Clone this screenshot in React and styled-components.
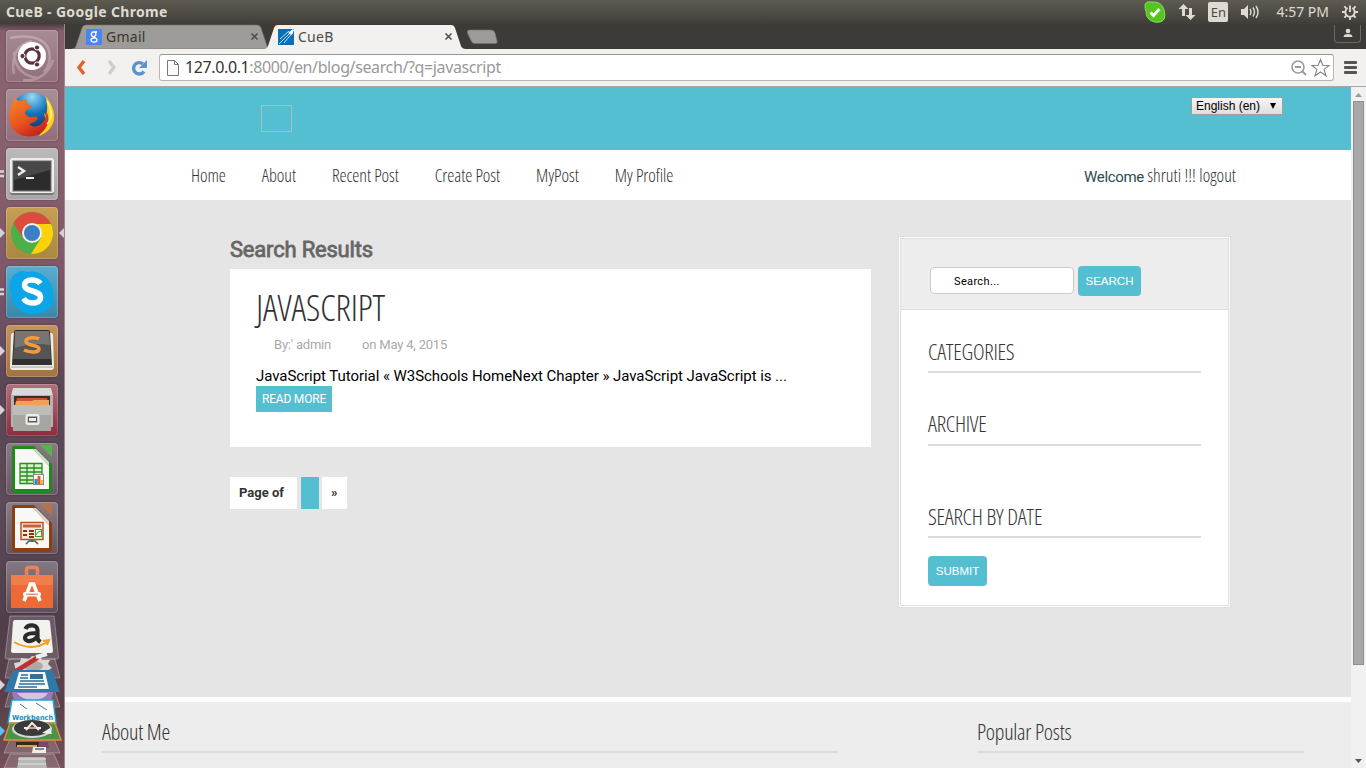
import React from "react";
import styled, { createGlobalStyle, css } from "styled-components";

const teal = "#55bfd2";

const GlobalStyle = createGlobalStyle`
  * { box-sizing: border-box; }
  html, body { margin: 0; padding: 0; height: 100%; overflow: hidden; }
  body { font-family: "Liberation Sans", Arial, sans-serif; }
`;

const condensed = css`
  font-family: "Open Sans", sans-serif;
  font-stretch: 75%;
  font-weight: 300;
`;

const Desktop = styled.div`
  width: 1366px;
  height: 768px;
  display: flex;
  flex-direction: column;
  overflow: hidden;
`;

const MenuBar = styled.header`
  height: 24px;
  flex: none;
  display: flex;
  align-items: center;
  justify-content: space-between;
  padding: 0 8px 0 6px;
  background: linear-gradient(#5e5b50, #3f3e39);
  color: #dfdbd2;
  font-family: "Noto Sans", sans-serif;
  font-size: 14px;
`;
const WindowTitle = styled.span`
  margin-top: -2px;
  font-weight: 700;
  font-size: 14px;
  letter-spacing: 0.34px;
`;
const Tray = styled.div`
  display: flex;
  align-items: center;
  height: 24px;
  svg { display: block; }
`;
const TrayItem = styled.div`
  margin-right: ${(p) => p.$gap}px;
  white-space: nowrap;
`;
const Clock = styled(TrayItem)`
  margin-top: -2px;
`;
const LangBadge = styled.div`
  width: 20px;
  height: 20px;
  margin-right: 12px;
  border-radius: 2px;
  background: #dfdbd2;
  color: #4a4842;
  font-size: 13px;
  line-height: 20px;
  text-align: center;
`;

const Workspace = styled.div`
  flex: 1;
  min-height: 0;
  display: flex;
`;

const Dock = styled.aside`
  width: 65px;
  flex: none;
  padding: 6px 0 0;
  display: flex;
  flex-direction: column;
  gap: 7px;
  border-right: 1px solid #a08592;
  background: linear-gradient(#4c3a42 0, #85606c 7px, #8a6370 80px, #815a69 230px, #6e5064 300px, #5a4655 360px, #5c4a58 480px, #513e4b 600px, #59404a 680px, #76505a 744px);
`;
const DockRow = styled.div`
  display: flex;
  align-items: center;
  height: 52px;
  flex: none;
`;
const Marker = styled.div`
  width: 6px;
  height: 10px;
  svg { display: block; }
`;
const Tile = styled.div`
  width: 52px;
  height: 52px;
  border-radius: 4px;
  background: ${(p) => p.$bg};
  box-shadow: inset 0 0 0 1px rgba(255, 255, 255, 0.2), 0 0 2px rgba(0, 0, 0, 0.4);
  svg { display: block; }
`;
const DockStack = styled.svg`
  display: block;
  flex: none;
  margin-top: -7px;
`;

const Browser = styled.section`
  width: 1301px;
  display: flex;
  flex-direction: column;
`;
const TabStrip = styled.div`
  height: 25px;
  flex: none;
  display: flex;
  justify-content: space-between;
  padding: 0 5px 0 7px;
  background: #3c3b37;
`;
const Tabs = styled.div`
  display: flex;
  align-items: flex-end;
`;
const TabBox = styled.div`
  display: grid;
  width: ${(p) => p.$w}px;
  height: 25px;
  margin-right: -8px;
  z-index: ${(p) => (p.$active ? 1 : 0)};
  > * { grid-area: 1 / 1; }
`;
const TabLabel = styled.div`
  display: flex;
  align-items: center;
  padding: 0 13px 0 14px;
  gap: 4px;
  z-index: 1;
  font: 14px "Noto Sans", sans-serif;
  color: ${(p) => (p.$active ? "#4a4a4a" : "#3c3528")};
  span { flex: 1; letter-spacing: 0.25px; }
`;
const NewTab = styled.svg`
  margin: 0 0 4px 8px;
`;
const UserButton = styled.div`
  width: 27px;
  height: 18px;
  margin-top: 1px;
  display: flex;
  justify-content: center;
  border: 1px solid #6a6964;
  border-top: 0;
  border-radius: 0 0 4px 4px;
`;
const Toolbar = styled.div`
  height: 38px;
  flex: none;
  display: flex;
  align-items: center;
  padding: 0 8px 0 10px;
  background: #f2f1f0;
  border-bottom: 1px solid #a9a6a3;
`;
const NavIcon = styled.div`
  width: 20px;
  height: 20px;
  margin-right: 8px;
`;
const Address = styled.div`
  width: 1175px;
  height: 27px;
  display: flex;
  align-items: center;
  padding: 0 2px 0 7px;
  border: 1px solid #b8b5b2;
  border-top-color: #98958f;
  border-radius: 3px;
  background: #fff;
  font: 16px "Noto Sans", sans-serif;
  color: #999;
  b { font-weight: 400; color: #333; }
`;
const Url = styled.span`
  flex: 1;
  margin-left: 6px;
  margin-top: -2px;
  letter-spacing: -0.38px;
`;
const MenuLines = styled.div`
  display: grid;
  gap: 2px;
  margin-left: 10px;
  i { display: block; width: 13px; height: 3px; border-radius: 1px; background: #555; }
`;

const Viewport = styled.div`
  flex: 1;
  min-height: 0;
  display: flex;
`;
const Page = styled.div`
  width: 1286px;
  display: flex;
  flex-direction: column;
  background: #fff;
`;
const Banner = styled.div`
  height: 63px;
  flex: none;
  display: flex;
  justify-content: space-between;
  align-items: flex-start;
  padding: 10px 68px 0 196px;
  background: ${teal};
`;
const EmptyLogo = styled.div`
  width: 31px;
  height: 27px;
  margin-top: 8px;
  border: 1px solid #9cc3c9;
`;
const LanguageSelect = styled.div`
  width: 92px;
  height: 18px;
  display: flex;
  align-items: center;
  justify-content: space-between;
  padding: 0 6px 0 4px;
  border: 1px solid #a29f9b;
  background: linear-gradient(#f6f6f6, #dedede);
  font-size: 12px;
  color: #000;
`;
const MainNav = styled.nav`
  height: 50px;
  flex: none;
  display: flex;
  align-items: center;
  padding: 0 115px 0 126px;
  background: #fff;
`;
const NavLink = styled.a`
  ${condensed}
  font-size: 18px;
  letter-spacing: -0.08px;
  color: #333;
  white-space: nowrap;
  margin-right: 36px;
`;
const Welcome = styled.div`
  margin-left: auto;
  white-space: nowrap;
  font: 15px Roboto, sans-serif;
  letter-spacing: -0.35px;
  color: #2d4a52;
`;
const UserLink = styled.a`
  ${condensed}
  font-size: 18px;
  letter-spacing: 0.04px;
  color: #333;
`;

const Content = styled.main`
  height: 497px;
  flex: none;
  display: flex;
  align-items: flex-start;
  padding: 36px 120px 0 165px;
  gap: 27px;
  background: #e5e5e5;
`;
const Results = styled.div`
  width: 641px;
`;
const ResultsTitle = styled.h1`
  height: 33px;
  margin: 0;
  padding-top: 1px;
  font: 400 22px/26px Roboto, sans-serif;
  letter-spacing: -0.2px;
  -webkit-text-stroke: 0.8px #666;
  color: #666;
`;
const Post = styled.article`
  height: 178px;
  padding: 12px 26px;
  background: #fff;
`;
const PostTitle = styled.h2`
  ${condensed}
  margin: 0;
  font-size: 36px;
  line-height: 54px;
  letter-spacing: -0.12px;
  color: #333;
`;
const PostMeta = styled.div`
  display: flex;
  gap: 31px;
  padding-left: 18px;
  font: 13px/20px Roboto, sans-serif;
  letter-spacing: -0.2px;
  color: #aaa;
`;
const Excerpt = styled.p`
  margin: 11px 0 0;
  font: 15px/20px Roboto, sans-serif;
  letter-spacing: -0.055px;
  color: #000;
`;
const ReadMore = styled.a`
  display: block;
  width: 76px;
  height: 26px;
  background: ${teal};
  color: #fff;
  font: 12px/27px Roboto, sans-serif;
  letter-spacing: -0.2px;
  text-align: center;
`;
const Pager = styled.div`
  display: flex;
  margin-top: 30px;
`;
const PageCell = styled.span`
  width: ${(p) => p.$w}px;
  height: 32px;
  margin-right: ${(p) => p.$gap || 0}px;
  padding-left: 9px;
  background: ${(p) => (p.$current ? teal : "#fff")};
  color: #333;
  font: 700 13px/32px Roboto, sans-serif;
`;

const Sidebar = styled.aside`
  width: 333px;
  height: 372px;
  border: 3px double #dedede;
  background: #fff;
`;
const SearchBox = styled.div`
  height: 71px;
  display: flex;
  padding: 27px 0 0 29px;
  gap: 4px;
  background: #ededed;
  border-bottom: 1px solid #dedede;
`;
const SearchInput = styled.div`
  width: 144px;
  height: 27px;
  margin-top: 1px;
  padding-left: 23px;
  border: 1px solid #ccc;
  border-radius: 4px;
  background: #fff;
  color: #000;
  font: 11px/27px Roboto, sans-serif;
  letter-spacing: 0.35px;
`;
const Button = styled.button`
  width: ${(p) => p.$w}px;
  height: 30px;
  padding: 0;
  border: 0;
  border-radius: 4px;
  background: ${teal};
  color: #fff;
  font: 11.5px "Liberation Sans", sans-serif;
`;
const Widgets = styled.div`
  padding: 27px 27px 0 27px;
`;
const WidgetTitle = styled.h3`
  ${condensed}
  height: 36px;
  margin: 0 0 ${(p) => p.$mb}px;
  border-bottom: 2px solid #dcdcdc;
  font-size: 22px;
  line-height: ${(p) => p.$line || 28}px;
  letter-spacing: -0.25px;
  color: #333;
`;
const Footer = styled.footer`
  flex: 1;
  margin-top: 5px;
  display: flex;
  gap: 139px;
  padding: 15px 0 0 37px;
  background: #ededed;
`;
const FooterColumn = styled.div`
  width: ${(p) => p.$w}px;
`;

const ScrollTrack = styled.div`
  width: 15px;
  display: flex;
  flex-direction: column;
  align-items: center;
  justify-content: space-between;
  background: #f1f1f1;
`;
const ScrollThumb = styled.div`
  width: 11px;
  height: 564px;
  margin-bottom: auto;
  border: 1px solid #8f8f8f;
  background: #a8a8a8;
`;

const glass = "linear-gradient(rgba(255,255,255,.28), rgba(255,255,255,.08))";

function UbuntuIcon() {
  return (
    <svg width="52" height="52" viewBox="0 0 52 52">
      <path d="M4 8C20 5 34 6 41 16c5 8 3 19-3 26M8 44C5 28 10 14 26 11M17 50c14 2 26-6 30-20M8 22c0 14 8 24 24 26" fill="none" stroke="#fff" strokeOpacity=".25" strokeWidth="2.500" />
      <circle cx="26" cy="26" r="14" fill="#fff" />
      <circle cx="26" cy="26" r="7.200" fill="none" stroke="#57333f" strokeWidth="3.200" />
      <g fill="#57333f" stroke="#fff" strokeWidth="1">
        <circle cx="16.500" cy="26" r="2.600" /><circle cx="31" cy="17.500" r="2.600" /><circle cx="31" cy="34.500" r="2.600" />
      </g>
    </svg>
  );
}
function FirefoxIcon() {
  return (
    <svg width="52" height="52" viewBox="0 0 52 52">
      <defs>
        <radialGradient id="ffb" cx=".5" cy=".1" r=".8"><stop offset="0" stopColor="#8fdcf7" /><stop offset=".5" stopColor="#1672b8" /><stop offset="1" stopColor="#0c2d66" /></radialGradient>
        <linearGradient id="ffo" x1="0" y1="0" x2=".6" y2="1"><stop offset="0" stopColor="#f58a28" /><stop offset=".6" stopColor="#e8551d" /><stop offset="1" stopColor="#c9241c" /></linearGradient>
      </defs>
      <circle cx="26" cy="25" r="21.500" fill="url(#ffb)" />
      <path d="M39 7c6 6 10 14 9 23-1 8-7 14-15 17 5-7 8-14 5-23l3 3c0-7 1-13-2-20z" fill="#ffcf1a" />
      <path d="M9 8c1 3 3 4 6 4 2 0 3-2 6-2-1 3 0 4 2 6 2 0 3 1 3 2-3 2-6 2-7 6 1 2 3 3 4 4 4 1 6-2 9 1-1 3-5 5-9 6 4 4 11 3 15-3 2-4 2-9 2-10 5 7 2 17-5 22-9 6-22 4-28-4C1 33 3 19 7 14c0-2 1-4 2-6z" fill="url(#ffo)" />
      <path d="M41 12c4 7 5 12 3 18M45 21c1 5 0 10-4 14" stroke="#fff19a" strokeWidth="1.500" fill="none" />
    </svg>
  );
}
function TerminalIcon() {
  return (
    <svg width="52" height="52" viewBox="0 0 52 52">
      <rect x="4" y="10" width="44" height="37" rx="2" fill="#777" />
      <rect x="4" y="10" width="44" height="35" rx="2" fill="#eee" />
      <rect x="6.500" y="12.500" width="39" height="31" fill="#555" stroke="#aaa" />
      <rect x="8" y="14" width="36" height="28" fill="#2c2c2c" /><path d="M8 14h36v8L8 32z" fill="#484848" />
      <path d="M12 19l6 4-6 4" fill="none" stroke="#eee" strokeWidth="2.400" /><path d="M20 30h8" stroke="#eee" strokeWidth="2" />
    </svg>
  );
}
function ChromeIcon() {
  return (
    <svg width="52" height="52" viewBox="0 0 52 52">
      <circle cx="26" cy="26" r="21" fill="#4caf48" />
      <path d="M7.500 16A21 21 0 0 1 45 17L26 17 17 31z" fill="#dd4b3e" />
      <path d="M26 17h19a21 21 0 0 1-20 30l10-16z" fill="#fdd20a" />
      <circle cx="26" cy="26" r="10" fill="#f4f1e8" /><circle cx="26" cy="26" r="8" fill="#3b7fc4" />
    </svg>
  );
}
function SkypeIcon() {
  return (
    <svg width="52" height="52" viewBox="0 0 52 52">
      <path d="M5 14A12 12 0 0 1 21 6c13-3 27 8 26 22 3 9-4 19-15 19-14 4-27-6-27-20-2-4-2-9 0-13z" fill="#0ba5e8" />
      <path d="M34.500 17.500c-2-2.500-5-3.500-9-3.500-4.500 0-7 2-7 5 0 7.500 16 4.500 16 12.500 0 4-4 5.500-8 5.500s-7-1.500-9-4.500" fill="none" stroke="#fff" strokeWidth="5.500" />
    </svg>
  );
}
function SublimeIcon() {
  return (
    <svg width="52" height="52" viewBox="0 0 52 52">
      <path d="M5 10q0-2 2-2h38q2 0 2 2l1 32q0 3-3 3H7q-3 0-3-3z" fill="#eeebe6" />
      <path d="M5 42h42" stroke="#aaa49a" strokeWidth="1" />
      <path d="M8 7q0-2 2-2h32q2 0 2 2l2 33H6z" fill="#2f2f2f" /><path d="M9 6h34l2 28H7z" fill="#555" /><path d="M9 6h34l1 14q-16-3-35 3z" fill="#757575" />
      <path d="M33 14c-3-2-13-2-13 2.500 0 4.500 13 3 13 7.500 0 4-10 3.500-15 1" fill="none" stroke="#f99a36" strokeWidth="3.600" />
    </svg>
  );
}
function FilesIcon() {
  return (
    <svg width="52" height="52" viewBox="0 0 52 52">
      <path d="M7 4h38l2 8H5z" fill="#d9d9d7" /><path d="M5 11h42v32H5z" fill="#b3b3b0" />
      <path d="M8 12h36v10H8z" fill="#3a2d28" /><path d="M11 14h30l2 8H9z" fill="#c5562e" /><path d="M10 17h16l2-1h15v6H9z" fill="#f1a05b" />
      <path d="M7 21h38v26H7z" fill="#a5a5a2" /><path d="M7 21h38v10H7z" fill="#bcbcb9" />
      <rect x="20.500" y="31" width="12" height="9" rx="1.500" fill="#aaa" stroke="#ececea" strokeWidth="2" /><rect x="22.500" y="33.500" width="8" height="4" fill="#eee" stroke="#555" />
    </svg>
  );
}
function OfficeIcon({ color, light, children }) {
  return (
    <svg width="52" height="52" viewBox="0 0 52 52">
      <path d="M8 3h20l18 18v26q0 3-3 3H9q-3 0-3-3V5q0-2 2-2z" fill={color} />
      <path d="M34 2h12v12z" fill={light} />
      <path d="M9 6h18l16 17v23H9z" fill="#f8f8f6" /><path d="M27 6l16 17V19L30 6z" fill="#d8d8d4" />
      {children}
    </svg>
  );
}
function SoftwareIcon() {
  return (
    <svg width="52" height="52" viewBox="0 0 52 52">
      <path d="M20.500 18V9q0-2.500 2.500-2.500h6q2.500 0 2.500 2.500v9" fill="none" stroke="#e9835e" strokeWidth="3.500" />
      <path d="M5 14h42v33H5z" fill="#ee6a34" /><path d="M5 14h42v10H5z" fill="#f28a5a" fillOpacity=".6" />
      <path d="M24.500 23l-6.500 17M27.500 23l6.500 17M23 23h6" stroke="#fff" strokeWidth="3.600" fill="none" /><rect x="17" y="31" width="18" height="4.500" rx="2" fill="#fff" /><path d="M20 33.200h12" stroke="#ee6a34" />
    </svg>
  );
}
function FoldedStack() {
  return (
    <DockStack width="64" height="155" viewBox="0 0 64 155">
      <g fill="#fff" fillOpacity=".15" stroke="#fff" strokeOpacity=".3">
        <path d="M10 3h44l4.500 41q0 2-2 2H7q-2 0-2-2z" /><path d="M9 46h46l5 19H5z" />
        <path d="M10 76h44l6 18H5z" /><path d="M10 126h44l6 14H4z" /><path d="M10 141h44l6 14H4z" />
      </g>
      <path d="M14 7h34q2 0 2 2l3 29q0 2-2 2H14q-3 0-3-2l2-29z" fill="#f2f2ef" />
      <path d="M25.500 16c2-5 12-5 12 1v8q0 2 3 4M37 20c-9 0-12 1.500-12 5s7 5 12-1" fill="none" stroke="#2b2b2b" strokeWidth="4.200" />
      <path d="M14 29q18 10 33 0M43 28l6-1-2 5" fill="none" stroke="#f79a22" strokeWidth="2" />
      <path d="M14 50l6-1 1-4 8 1 3-3 8 1 2 3 8 0-2 4 4 4-5 3v4H17z" fill="#d9d8d4" /><ellipse cx="33" cy="53" rx="10" ry="5" fill="#aaa9a7" />
      <path d="M13 60l24-15" stroke="#c42f27" strokeWidth="4.500" fill="none" strokeLinecap="round" /><path d="M36 44l11-3" stroke="#eee" strokeWidth="4" />
      <path d="M13 57h39l8 22H4z" fill="#2e79a8" /><path d="M19 59h26l4 17H14z" fill="#f6f6f4" />
      <path d="M21 62h7M20 65h8M20 68h24M19 71h26M18 74h19" stroke="#2e6f9c" strokeWidth="1.300" /><path d="M30 61h13v5H30z" fill="#356f9b" />
      <path d="M12 79h41q0 13-20 14T12 79z" fill="#9a78bd" /><path d="M17 80h31q-4 7-15 7t-16-7z" fill="#d4c4e4" />
      <path d="M12 87h41l3 23H8z" fill="#fff" stroke="#1aa9dc" strokeWidth="1.400" /><path d="M20 91l7 5M36 90l11 7" stroke="#3a7fae" />
      <text x="12" y="107" fontFamily="DejaVu Sans" fontWeight="700" fontSize="7" textLength="41" lengthAdjust="spacingAndGlyphs" fill="#138dc0">Workbench</text>
      <path d="M10 110h45l6 17H4z" fill="#4b9444" stroke="#e88b39" strokeWidth="1.400" />
      <ellipse cx="32" cy="116" rx="20" ry="9" fill="#d6d8d5" /><ellipse cx="32" cy="115" rx="18" ry="8" fill="#383b39" /><path d="M26 117l6-7 7 7M24 115h17" stroke="#eee" strokeWidth="2" fill="none" /><path d="M29 115h7" stroke="#e05a2a" strokeWidth="1.200" /><path d="M42 120l8-5 2 6z" fill="#eee" />
      <path d="M16 129h24v5H16z" fill="#34291e" /><path d="M17 133h20" stroke="#d8a652" strokeWidth="2" /><path d="M39 129h9l1 6H38z" fill="#7c4570" /><path d="M33 134h13v6H32z" fill="#eee" /><path d="M35 136h9" stroke="#222" />
      <path d="M19 144h26l2 11H17z" fill="#b8b8b5" /><path d="M18 146h28M18 151h28" stroke="#d4d4d2" strokeWidth="1.500" />
      <path d="M0 67v10l5-5z" fill="#d9d4d4" /><path d="M0 113v10l5-5z" fill="#5fc2ee" />
    </DockStack>
  );
}

const dots = <svg width="6" height="10"><path d="M0 2.500h4M0 7h4" stroke="#d8d2d4" strokeWidth="2.400" /></svg>;
const arrow = <svg width="6" height="10"><path d="M0 0v10l5-5z" fill="#d8d2d4" /></svg>;

const launchers = [
  { bg: glass, icon: <UbuntuIcon /> },
  { bg: glass, icon: <FirefoxIcon /> },
  { bg: "linear-gradient(#bbb9ba,#a9a6a8)", icon: <TerminalIcon />, mark: dots },
  { bg: "linear-gradient(#c79f55,#aa883f)", icon: <ChromeIcon />, mark: arrow, focused: true },
  { bg: "linear-gradient(#58aecf,#3d86a8)", icon: <SkypeIcon />, mark: dots },
  { bg: "linear-gradient(#c5935e,#a2733f)", icon: <SublimeIcon />, mark: arrow },
  { bg: "linear-gradient(#b06f7b,#8d2c3c)", icon: <FilesIcon />, mark: arrow },
  {
    bg: glass,
    icon: (
      <OfficeIcon color="#1f8a17" light="#54b54b">
        <path d="M14 20h22v21H14z" fill="#d4f1cb" /><path d="M14 20.500h22v20H14zM14 25h22M14 29h22M14 33h22M14 37h22M21 20v20M28 20v20" fill="none" stroke="#2b8c22" strokeWidth="1.300" />
        <rect x="27.500" y="31.500" width="10" height="10" fill="#fff" stroke="#888" /><path d="M30 41v-5" stroke="#188ed0" strokeWidth="3" /><path d="M33 41v-8" stroke="#e8581c" strokeWidth="3" /><path d="M36 41v-4" stroke="#f5be2a" strokeWidth="2" />
      </OfficeIcon>
    ),
  },
  {
    bg: glass,
    icon: (
      <OfficeIcon color="#8d3f12" light="#b9714a">
        <rect x="15" y="20.500" width="22" height="17" fill="#fbe9dd" stroke="#b5541d" strokeWidth="1.500" /><path d="M17 24h18" stroke="#c4642d" strokeWidth="3" />
        <path d="M17 29h4M17 33h4M23 29h5M23 32h5M23 35h5" stroke="#8d3212" strokeWidth="2" /><rect x="29.500" y="27.500" width="6" height="7" fill="#fff" stroke="#3c9b34" /><path d="M30 33l2-3 3-1" stroke="#3c9b34" fill="none" />
        <path d="M26 38v2M20 42l3-3h6l3 3" stroke="#555" strokeWidth="1.500" fill="none" />
      </OfficeIcon>
    ),
  },
  { bg: glass, icon: <SoftwareIcon /> },
];

function Tab({ label, icon, width, active }) {
  return (
    <TabBox $w={width} $active={active}>
      <svg width={width} height="25">
        <path d={`M0 25q3 0 4-3L10 4q1-3 4-3H${width - 15}q3 0 4 3l6 18q1 3 5 3z`} fill={active ? "#f2f1f0" : "#9d9b98"} stroke={active ? "none" : "#77756f"} strokeWidth=".6" />
      </svg>
      <TabLabel $active={active}>
        {icon}
        <span>{label}</span>
        <svg width="9" height="9"><path d="M1.500 1.500l6 6M7.500 1.500l-6 6" stroke="#4b4b4b" strokeWidth="1.500" /></svg>
      </TabLabel>
    </TabBox>
  );
}

const gIcon = (
  <svg width="16" height="16">
    <rect width="16" height="16" rx="1" fill="#4a86f0" />
    <path d="M11 3H7.500a2.300 2.300 0 1 0 1 4.400c0 1.600 2.500 1.600 2.500 3.500 0 2.800-6 2.800-6 .2 0-1.800 2-2.100 4-2.100M9 3q2 2.500-.5 4.400" fill="none" stroke="#fff" strokeWidth="1.300" />
  </svg>
);
const cueIcon = (
  <svg width="16" height="16">
    <rect width="16" height="16" fill="#0c6eb8" />
    <path d="M1 15L13 3M6 14L15 3M2 10l9-8" stroke="#d7eafa" strokeWidth=".9" /><path d="M10 4l5-4 1 1-2 5z" fill="#fff" />
  </svg>
);

export default function App() {
  return (
    <Desktop>
      <GlobalStyle />
      <MenuBar>
        <WindowTitle>CueB - Google Chrome</WindowTitle>
        <Tray>
          <TrayItem $gap={12}>
            <svg width="22" height="22"><path d="M1 5q0-5 6-4 11-1 13 8 3 10-4 12-5 1-8-1Q2 18 2 10 1 8 1 5z" fill="#53c51e" stroke="#8ae05e" /><path d="M6.500 11.500l3 3 6-6.500" fill="none" stroke="#fff" strokeWidth="3" /></svg>
          </TrayItem>
          <TrayItem $gap={12}>
            <svg width="18" height="18"><path d="M5.500 1L.5 6H4v7h3V6h3.500zM12.500 17l-5-5H11V5h3v7h3.500z" fill="#dfdbd2" /></svg>
          </TrayItem>
          <LangBadge>En</LangBadge>
          <TrayItem $gap={16}>
            <svg width="20" height="16"><path d="M1 5h3l4-4v14l-4-4H1z" fill="#dfdbd2" /><path d="M10 5q2 3 0 6M13 3.500q3 4.500 0 9M16 2q4 6 0 12" fill="none" stroke="#dfdbd2" strokeWidth="1.400" /></svg>
          </TrayItem>
          <Clock $gap={13}>4:57 PM</Clock>
          <svg width="16" height="16" viewBox="0 0 17 17">
            <path d="M6 4.300a5 5 0 1 0 5 0" fill="none" stroke="#dfdbd2" strokeWidth="2" />
            <path d="M8.500 1.500v7M8.500 14v3M0 8.500h3M14 8.500h3M2.500 2.500l2 2M12.500 12.500l2 2M2.500 14.500l2-2M12.500 4.500l2-2" stroke="#dfdbd2" strokeWidth="2" />
          </svg>
        </Tray>
      </MenuBar>
      <Workspace>
        <Dock>
          {launchers.map((l, i) => (
            <DockRow key={i}>
              <Marker>{l.mark}</Marker>
              <Tile $bg={l.bg}>{l.icon}</Tile>
              {l.focused && <svg width="6" height="10"><path d="M6 0v10L1 5z" fill="#d8d2d4" /></svg>}
            </DockRow>
          ))}
          <FoldedStack />
        </Dock>
        <Browser>
          <TabStrip>
            <Tabs>
              <Tab label="Gmail" icon={gIcon} width={200} />
              <Tab label="CueB" icon={cueIcon} width={202} active />
              <NewTab width="32" height="16"><path d="M3 1h22q3 0 4 3l2 8q1 2.500-2 2.500H9q-3 0-4-3L1.500 4Q1 1 3 1z" fill="#9d9b98" stroke="#77756f" strokeWidth=".6" /></NewTab>
            </Tabs>
            <UserButton><svg width="12" height="15"><circle cx="6" cy="6" r="2.300" fill="#dfdbd2" /><path d="M1.500 12q0-3 4.500-3t4.500 3z" fill="#dfdbd2" /></svg></UserButton>
          </TabStrip>
          <Toolbar>
            <NavIcon><svg width="20" height="20"><path d="M9 3L4 9.500 9 16" fill="none" stroke="#e2622c" strokeWidth="3.400" /></svg></NavIcon>
            <NavIcon><svg width="20" height="20"><path d="M6 3l5 6.500L6 16" fill="none" stroke="#cfcdca" strokeWidth="3.400" /></svg></NavIcon>
            <NavIcon><svg width="20" height="20"><path d="M13 13.500A5.700 5.700 0 1 1 12 6" fill="none" stroke="#5b93cf" strokeWidth="3.400" /><path d="M16 2v8H8z" fill="#5b93cf" /></svg></NavIcon>
            <Address>
              <svg width="12" height="16"><path d="M.5 .5h7l4 4v11H.5zM7.500 .5v4h4" fill="#fafafa" stroke="#777" /></svg>
              <Url><b>127.0.0.1</b>:8000/en/blog/search/?q=javascript</Url>
              <svg width="21" height="18"><circle cx="8" cy="8" r="6" fill="none" stroke="#999" strokeWidth="1.600" /><path d="M5 8h6M12 12l4 4" stroke="#999" strokeWidth="1.800" /></svg>
              <svg width="20" height="20" viewBox="0 0 20 20"><path d="M9.500 1.500l2.400 6H18l-4.900 3.900 1.900 6.400-5.500-3.900L4 17.800l1.900-6.400L1 7.500h6.100z" fill="#fff" stroke="#888" strokeWidth="1.200" /></svg>
            </Address>
            <MenuLines><i /><i /><i /></MenuLines>
          </Toolbar>
          <Viewport>
            <Page>
              <Banner>
                <EmptyLogo />
                <LanguageSelect>
                  <span>English (en)</span>
                  <svg width="6" height="6"><path d="M0 0h6L3 6z" fill="#000" /></svg>
                </LanguageSelect>
              </Banner>
              <MainNav>
                {["Home", "About", "Recent Post", "Create Post", "MyPost", "My Profile"].map((t) => <NavLink key={t}>{t}</NavLink>)}
                <Welcome>Welcome <UserLink>shruti !!! logout</UserLink></Welcome>
              </MainNav>
              <Content>
                <Results>
                  <ResultsTitle>Search Results</ResultsTitle>
                  <Post>
                    <PostTitle>JAVASCRIPT</PostTitle>
                    <PostMeta><span>By:' admin</span><span>on May 4, 2015</span></PostMeta>
                    <Excerpt>JavaScript Tutorial « W3Schools HomeNext Chapter » JavaScript JavaScript is ...</Excerpt>
                    <ReadMore>READ MORE</ReadMore>
                  </Post>
                  <Pager>
                    <PageCell $w={67} $gap={4}>Page of</PageCell>
                    <PageCell $w={18} $gap={3} $current />
                    <PageCell $w={25}>»</PageCell>
                  </Pager>
                </Results>
                <Sidebar>
                  <SearchBox>
                    <SearchInput>Search...</SearchInput>
                    <Button $w={63}>SEARCH</Button>
                  </SearchBox>
                  <Widgets>
                    <WidgetTitle $mb={37}>CATEGORIES</WidgetTitle>
                    <WidgetTitle $mb={56} $line={26}>ARCHIVE</WidgetTitle>
                    <WidgetTitle $mb={18}>SEARCH BY DATE</WidgetTitle>
                    <Button $w={59}>SUBMIT</Button>
                  </Widgets>
                </Sidebar>
              </Content>
              <Footer>
                <FooterColumn $w={736}><WidgetTitle $mb={0}>About Me</WidgetTitle></FooterColumn>
                <FooterColumn $w={327}><WidgetTitle $mb={0}>Popular Posts</WidgetTitle></FooterColumn>
              </Footer>
            </Page>
            <ScrollTrack>
              <svg width="15" height="14"><path d="M4 10h7L7.500 6z" fill="#999" /></svg>
              <ScrollThumb />
              <svg width="15" height="14"><path d="M4 5h7L7.500 9z" fill="#555" /></svg>
            </ScrollTrack>
          </Viewport>
        </Browser>
      </Workspace>
    </Desktop>
  );
}
